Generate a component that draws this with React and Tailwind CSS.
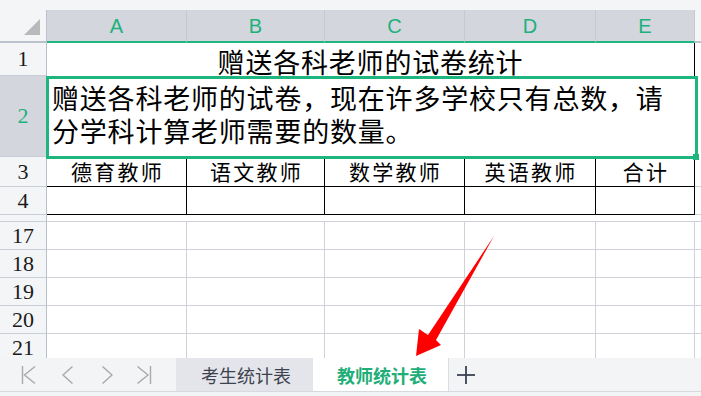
import React from "react";

const colW = ["w-[140px]", "w-[138px]", "w-[140px]", "w-[131px]", "w-[99px]"];
const letters = ["A", "B", "C", "D", "E"];
const heads = ["德育教师", "语文教师", "数学教师", "英语教师", "合计"];

function RowHead({ n, active, className = "" }) {
  return (
    <div
      className={`w-[47px] shrink-0 flex items-center justify-center border-r border-b border-r-[#b9bfcc] border-b-[#c9cdd7] font-['Liberation_Serif',serif] text-[22px] leading-none ${
        active ? "bg-[#d3d6dd] text-[#20b07c]" : "bg-[#f4f5f7] text-[#1a1a1a]"
      } ${className}`}
    >
      {n}
    </div>
  );
}

function GridRow({ n }) {
  return (
    <div className="flex h-[28px] shrink-0">
      <RowHead n={n} />
      {colW.map((w, i) => (
        <div key={i} className={`${w} shrink-0 border-r border-b border-[#cfd2db]`} />
      ))}
      <div className="flex-1 border-b border-[#cfd2db]" />
    </div>
  );
}

export default function App() {
  return (
    <div className="relative w-[701px] h-[396px] overflow-hidden bg-white flex flex-col font-['Noto_Sans_CJK_SC',sans-serif] text-black">
      <div className="h-[10px] shrink-0 bg-[#f4f5f7]" />

      {/* column header */}
      <div className="flex h-[33px] shrink-0">
        <div className="w-[47px] shrink-0 bg-[#f4f5f7] border-b-2 border-r border-[#bcc1ce] flex items-end justify-end pr-[6px] pb-[6px]">
          <svg width="16" height="16" viewBox="0 0 16 16">
            <polygon points="16,0 16,16 0,16" fill="#b7b9bd" />
          </svg>
        </div>
        {colW.map((w, i) => (
          <div
            key={i}
            className={`${w} shrink-0 bg-[#d3d6dd] border-b-2 border-b-[#1fb57f] border-r border-r-[#c6c9d1] flex items-center justify-center font-['Liberation_Sans',sans-serif] text-[20px] leading-none text-[#20b07c]`}
          >
            {letters[i]}
          </div>
        ))}
        <div className="flex-1 bg-[#f4f5f7] border-b-2 border-[#bcc1ce]" />
      </div>

      {/* row 1 */}
      <div className="flex h-[33px] shrink-0">
        <RowHead n={1} />
        <div className="w-[648px] shrink-0 border-r border-black flex items-center justify-center pt-[3px] text-[27px] leading-none tracking-[0.8px]">
          赠送各科老师的试卷统计
        </div>
        <div className="flex-1" />
      </div>

      {/* row 2 */}
      <div className="flex h-[81px] shrink-0">
        <RowHead n={2} active />
        <div className="w-[648px] shrink-0 flex items-center pl-[5px] font-['Liberation_Sans','Noto_Sans_CJK_SC',sans-serif] text-[27px] leading-[33px] tracking-[0.8px]">
          <div>
            赠送各科老师的试卷，现在许多学校只有总数，请
            <br />
            分学科计算老师需要的数量。
          </div>
        </div>
        <div className="flex-1" />
      </div>

      {/* row 3 */}
      <div className="flex h-[30px] shrink-0">
        <RowHead n={3} />
        {colW.map((w, i) => (
          <div
            key={i}
            className={`${w} shrink-0 border-r border-b border-black flex items-center justify-center pl-[2px] text-[21px] leading-none tracking-[2.3px]`}
          >
            {heads[i]}
          </div>
        ))}
        <div className="flex-1 border-b border-[#cfd2db]" />
      </div>

      {/* row 4 */}
      <div className="flex h-[28px] shrink-0">
        <RowHead n={4} />
        {colW.map((w, i) => (
          <div key={i} className={`${w} shrink-0 border-r border-b border-black`} />
        ))}
        <div className="flex-1 border-b border-[#cfd2db]" />
      </div>

      {/* freeze split */}
      <div className="flex h-[7px] shrink-0">
        <div className="w-[47px] shrink-0 bg-[#f4f5f7] border-r border-b border-r-[#b9bfcc] border-b-[#c9cdd7]" />
        <div className="flex-1 border-b border-[#cfd2db]" />
      </div>

      {/* rows 17-21 */}
      <div className="flex-1 overflow-hidden flex flex-col">
        {[17, 18, 19, 20, 21].map((n) => (
          <GridRow key={n} n={n} />
        ))}
      </div>

      {/* sheet tabs */}
      <div className="h-[38px] shrink-0 flex flex-col bg-[#f3f4f6]">
        <div className="h-[33px] flex">
          <div className="w-[176px] shrink-0 flex items-center text-[#a9a9a9]">
            <svg className="ml-[21px]" width="16" height="18" viewBox="0 0 16 18" fill="none" stroke="currentColor" strokeWidth="1.4">
              <line x1="1.5" y1="0" x2="1.5" y2="18" />
              <polyline points="14,0.5 3.5,9 14,17.5" />
            </svg>
            <svg className="ml-[25px]" width="12" height="18" viewBox="0 0 12 18" fill="none" stroke="currentColor" strokeWidth="1.4">
              <polyline points="10.5,0.5 1,9 10.5,17.5" />
            </svg>
            <svg className="ml-[27px]" width="12" height="18" viewBox="0 0 12 18" fill="none" stroke="currentColor" strokeWidth="1.4">
              <polyline points="1.5,0.5 11,9 1.5,17.5" />
            </svg>
            <svg className="ml-[23px]" width="16" height="18" viewBox="0 0 16 18" fill="none" stroke="currentColor" strokeWidth="1.4">
              <polyline points="1.5,0.5 12,9 1.5,17.5" />
              <line x1="14.5" y1="0" x2="14.5" y2="18" />
            </svg>
          </div>
          <div className="w-[137px] shrink-0 bg-[#e4e5ea] flex items-center justify-center pl-[3px] text-[18px] leading-none text-[#3d4350]">
            考生统计表
          </div>
          <div className="w-[135px] shrink-0 bg-white flex items-center justify-center pl-[3px] text-[18px] leading-none font-bold text-[#1fae78]">
            教师统计表
          </div>
          <div className="flex-1 border-l border-[#dcdde2] flex items-center pl-[8px]">
            <svg width="18" height="18" viewBox="0 0 18 18" stroke="#3b4252" strokeWidth="1.8">
              <line x1="9" y1="0" x2="9" y2="18" />
              <line x1="0" y1="9" x2="18" y2="9" />
            </svg>
          </div>
        </div>
        <div className="flex-1 border-t border-[#d8d9de] bg-[#f3f4f6]" />
      </div>

      {/* selection box */}
      <div className="absolute left-[46px] top-[76px] w-[652px] h-[83px] border-[3px] border-[#1fb57f] pointer-events-none" />
      <div className="absolute left-[693px] top-[154px] w-[6px] h-[6px] bg-[#1fb57f] pointer-events-none" />

      {/* red arrow annotation */}
      <svg className="absolute inset-0 pointer-events-none" width="701" height="396" viewBox="0 0 701 396">
        <polygon points="494,236 436,340 441,345 416,356 419,329 428,335" fill="#ff0000" />
      </svg>
    </div>
  );
}
